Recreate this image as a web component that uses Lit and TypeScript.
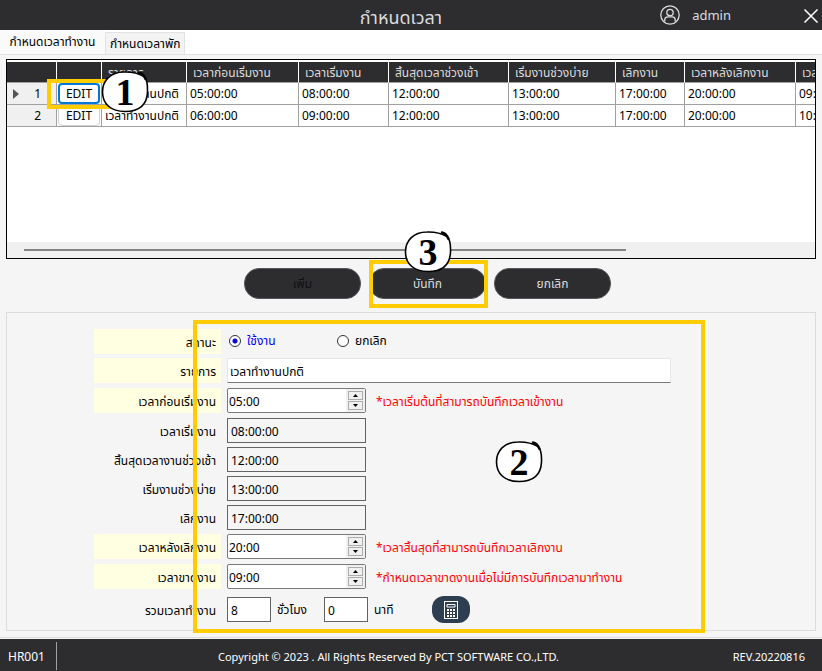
import { LitElement, html, css, svg } from "lit";
import { customElement, property, state } from "lit/decorators.js";

const FONT = css`"Noto Sans", "Noto Sans Thai", sans-serif`;

interface Shift {
  name: string;
  times: string[];
}

const COLUMNS = [
  "รายการ",
  "เวลาก่อนเริ่มงาน",
  "เวลาเริ่มงาน",
  "สิ้นสุดเวลาช่วงเช้า",
  "เริ่มงานช่วงบ่าย",
  "เลิกงาน",
  "เวลาหลังเลิกงาน",
  "เวลาขาดงาน",
];

const SHIFTS: Shift[] = [
  {
    name: "เวลาทำงานปกติ",
    times: ["05:00:00", "08:00:00", "12:00:00", "13:00:00", "17:00:00", "20:00:00", "09:00:00"],
  },
  {
    name: "เวลาทำงานปกติ",
    times: ["06:00:00", "09:00:00", "12:00:00", "13:00:00", "17:00:00", "20:00:00", "10:00:00"],
  },
];

/* Hand-drawn circle with a step number inside. */
@customElement("step-badge")
export class StepBadge extends LitElement {
  @property() step = "1";

  static styles = css`
    :host {
      display: grid;
      width: 48px;
      height: 44px;
      pointer-events: none;
    }
    .ring,
    .num {
      grid-area: 1 / 1;
    }
    .num {
      place-self: center;
      font: bold 38px/40px "Liberation Serif", serif;
      color: #000;
    }
  `;

  render() {
    return html`
      <svg class="ring" width="48" height="44" viewBox="0 0 48 44" aria-hidden="true">
        ${svg`<path d="M23 2C9 2 1.500 11 1.500 22C1.500 34 10 41.500 24 41.500C39 41.500 46 34 46.500 22C46.800 14 46 9 43 6.500C37 3 30 1.800 23 2Z" fill="#fff" stroke="#000" stroke-width="1.600"/>
        <path d="M38 2.500Q42 3 44.500 9" fill="none" stroke="#000" stroke-width="2.400" stroke-linecap="round"/>`}
      </svg>
      <span class="num">${this.step}</span>
    `;
  }
}

/* Time box with a pair of up and down buttons. */
@customElement("time-spinner")
export class TimeSpinner extends LitElement {
  @property() value = "";
  @property() label = "";

  static styles = css`
    :host {
      display: block;
      width: 139px;
      flex: none;
    }
    .box {
      display: flex;
      box-sizing: border-box;
      height: 25px;
      border: 1px solid #7a7a7a;
      border-radius: 2px;
      background: #fff;
    }
    .value {
      flex: 1;
      min-width: 0;
      border: 0;
      padding: 2px 1px 0;
      background: none;
      outline: none;
      font: 12px/20px ${FONT};
      color: #000;
    }
    .steps {
      display: flex;
      flex-direction: column;
      gap: 1px;
      padding: 2px;
      background: #f0f0f0;
    }
    .step {
      display: grid;
      place-items: center;
      width: 15px;
      height: 9px;
      padding: 0;
      border: 1px solid #adadad;
      background: #f0f0f0;
    }
  `;

  render() {
    return html`
      <div class="box">
        <input class="value" aria-label=${this.label} .value=${this.value} />
        <div class="steps">
          <button class="step" aria-label="เพิ่มเวลา">
            <svg width="5" height="3" viewBox="0 0 5 3"><path d="M0 3L2.500 0L5 3Z" /></svg>
          </button>
          <button class="step" aria-label="ลดเวลา">
            <svg width="5" height="3" viewBox="0 0 5 3"><path d="M0 0L2.500 3L5 0Z" /></svg>
          </button>
        </div>
      </div>
    `;
  }
}

@customElement("app-root")
export class AppRoot extends LitElement {
  @state() private active = true;

  static styles = css`
    :host {
      display: flex;
      flex-direction: column;
      min-height: 100vh;
      background: #f5f5f5;
      color: #000;
      font: 12px/20px ${FONT};
    }
    button,
    input {
      font: inherit;
      color: inherit;
    }
    .topbar {
      display: grid;
      grid-template-columns: 1fr auto 1fr;
      align-items: center;
      height: 30px;
      background: #2d2d30;
      color: #dcdcdc;
    }
    .title {
      grid-column: 2;
      margin: 0;
      padding: 4px 20px 0 0;
      font-size: 18px;
      font-weight: 400;
    }
    .user {
      display: flex;
      align-items: center;
      justify-content: flex-end;
      gap: 12px;
      padding-right: 3px;
      font-size: 13px;
    }
    .close {
      display: grid;
      margin-left: 60px;
      padding: 2px 0 0;
      border: 0;
      background: none;
    }
    .tabs {
      display: flex;
      align-items: flex-end;
      height: 24px;
      border-bottom: 1px solid #e2e2e2;
      background: #fff;
    }
    .tab {
      height: 22px;
      padding: 1px 4px 0;
      border: 1px solid #e2e2e2;
      border-bottom: 0;
      background: #f3f3f3;
      white-space: nowrap;
    }
    .tab.current {
      width: 105px;
      height: 24px;
      padding: 0;
      border: 0;
      background: #fafafa;
    }
    .page {
      display: flex;
      flex: 1;
      flex-direction: column;
      padding: 4px 6px 6px;
      border-bottom: 1px solid #dcdcdc;
      margin-bottom: 1px;
    }
    .gridbox {
      position: relative;
      display: flex;
      flex-direction: column;
      height: 198px;
      border: 1px solid #000;
      background: #fff;
    }
    .viewport {
      flex: 1;
      overflow: hidden;
      padding-top: 2px;
    }
    .shifts {
      width: 900px;
      border-collapse: separate;
      border-spacing: 0;
      table-layout: fixed;
    }
    .c-mark { width: 50px; }
    .c-edit { width: 45px; }
    .c-name { width: 85px; }
    .c-1 { width: 112px; }
    .c-2 { width: 90px; }
    .c-3 { width: 120px; }
    .c-4 { width: 107px; }
    .c-5 { width: 69px; }
    .c-6 { width: 111px; }
    .shifts th,
    .shifts td {
      box-sizing: border-box;
      height: 22px;
      padding: 0 3px;
      overflow: hidden;
      border-right: 1px solid #a0a0a0;
      border-bottom: 1px solid #a0a0a0;
      font-weight: 400;
      text-align: left;
      white-space: nowrap;
    }
    .shifts thead th {
      height: 21px;
      padding: 2px 6px 0;
      border-right-color: #fff;
      background: #2d2d30;
      color: #dcdcdc;
      line-height: 18px;
    }
    .shifts tbody th {
      background: #f0f0f0;
    }
    .rowhead {
      display: flex;
      align-items: center;
      justify-content: space-between;
      padding: 0 12px 0 3px;
    }
    .shifts td.editcell {
      padding: 0 1px;
    }
    .edit {
      display: block;
      box-sizing: border-box;
      width: 100%;
      height: 21px;
      padding: 0;
      border: 1px solid #d0d0d0;
      border-radius: 4px;
      background: #fdfdfd;
      line-height: 18px;
    }
    .edit.focus {
      border: 2px solid #0078d7;
    }
    .hscroll {
      display: flex;
      align-items: center;
      height: 16px;
      padding: 0 189px 0 17px;
      background: #f0f0f0;
    }
    .thumb {
      flex: 1;
      height: 2px;
      background: #858585;
    }
    .actions {
      display: flex;
      justify-content: center;
      gap: 8px;
      margin-top: 9px;
      padding-left: 33px;
      margin-bottom: 13px;
    }
    .slot {
      position: relative;
    }
    .action {
      width: 117px;
      height: 31px;
      padding: 0;
      border: 1px solid #55565a;
      border-radius: 15px;
      background: #2d2d30;
      color: #dcdcdc;
    }
    .action:disabled {
      color: #101010;
    }
    .form {
      position: relative;
      box-sizing: border-box;
      margin: 0;
      height: 319px;
      padding: 16px 0 8px 87px;
      border: 1px solid #dcdcdc;
      display: flex;
      flex-direction: column;
      gap: 4px;
    }
    .row {
      display: flex;
      align-items: center;
      height: 25px;
    }
    .row.wide,
    .row.spin {
      margin-bottom: 1px;
    }
    .row.total {
      margin-top: 3px;
    }
    .cap {
      box-sizing: border-box;
      width: 127px;
      height: 25px;
      flex: none;
      margin-right: 6px;
      padding: 4px 5px 0 0;
      text-align: right;
    }
    .need {
      background: #ffffe1;
    }
    .radio {
      display: flex;
      align-items: center;
      gap: 6px;
      width: 108px;
      padding-bottom: 2px;
    }
    .radio.on {
      color: #00f;
    }
    .dot {
      appearance: none;
      box-sizing: border-box;
      width: 12px;
      height: 12px;
      margin: 0 0 0 2px;
      border: 1px solid #333;
      border-radius: 50%;
      background: #fff;
    }
    .dot:checked {
      background: radial-gradient(circle, #0000e0 2px, #fff 3px);
    }
    .text {
      box-sizing: border-box;
      width: 139px;
      height: 25px;
      padding: 2px 3px 0;
      border: 1px solid #646464;
      background: #f5f5f5;
    }
    .text.long {
      width: 444px;
      padding: 2px 2px 0;
      border-color: #e6e6e6 #e6e6e6 #7a7a7a;
      background: #fff;
    }
    .text.short {
      width: 44px;
      background: #fff;
    }
    .unit {
      width: 53px;
      padding-left: 6px;
      box-sizing: border-box;
    }
    .note {
      padding: 2px 0 0 10px;
      color: #f00;
    }
    .calc {
      display: grid;
      place-items: center;
      width: 38px;
      height: 27px;
      margin-left: 11px;
      padding: 0;
      border: 0;
      border-radius: 12px;
      background: #2c3e50;
    }
    .mark {
      position: absolute;
      box-sizing: border-box;
      border: 4px solid #fc0;
      pointer-events: none;
    }
    .mark-edit {
      left: 40px;
      top: 19px;
      width: 64px;
      height: 30px;
    }
    .mark-save {
      left: 0;
      top: -8px;
      width: 119px;
      height: 48px;
    }
    .mark-form {
      left: 186px;
      top: 7px;
      width: 512px;
      height: 313px;
    }
    step-badge {
      position: absolute;
    }
    .at-edit {
      left: 94px;
      top: 10px;
    }
    .at-save {
      left: 35px;
      top: -38px;
    }
    .at-form {
      left: 488px;
      top: 127px;
    }
    .footer {
      display: grid;
      grid-template-columns: 57px 1fr auto;
      align-items: center;
      height: 32px;
      padding: 2px 17px 0 0;
      box-sizing: border-box;
      background: #2d2d30;
      color: #fff;
      font-size: 11px;
    }
    .code {
      height: 28px;
      padding-left: 8px;
      border-right: 1px solid #a0a0a0;
      font-size: 12px;
      line-height: 30px;
      box-sizing: border-box;
    }
    .copy {
      padding: 2px 0 0 161px;
    }
    .rev {
      padding-top: 2px;
    }
  `;

  private timeRow(label: string, value: string) {
    return html`
      <label class="row">
        <span class="cap">${label}</span>
        <input class="text" readonly .value=${value} />
      </label>
    `;
  }

  private spinRow(label: string, value: string, note: string) {
    return html`
      <div class="row spin">
        <span class="cap need">${label}</span>
        <time-spinner .label=${label} .value=${value}></time-spinner>
        <span class="note">${note}</span>
      </div>
    `;
  }

  render() {
    return html`
      <header class="topbar">
        <h1 class="title">กำหนดเวลา</h1>
        <div class="user">
          <svg width="20" height="20" viewBox="0 0 20 20" fill="none" stroke="#dcdcdc" stroke-width="1.300" aria-hidden="true">
            <circle cx="10" cy="10" r="9.200" />
            <circle cx="10" cy="7.500" r="3.200" />
            <path d="M4.800 16.500V14.500Q5 11.800 8 11.800H12Q15 11.800 15.200 14.500V16.500" />
          </svg>
          <span>admin</span>
          <button class="close" aria-label="ปิด">
            <svg width="16" height="16" viewBox="0 0 16 16" stroke="#fff" stroke-width="1.500"><path d="M1.500 1.500L14.500 14.500M14.500 1.500L1.500 14.500" /></svg>
          </button>
        </div>
      </header>
      <nav class="tabs" role="tablist">
        <button class="tab current" role="tab" aria-selected="true">กำหนดเวลาทำงาน</button>
        <button class="tab" role="tab" aria-selected="false">กำหนดเวลาพัก</button>
      </nav>
      <main class="page">
        <section class="gridbox">
          <div class="viewport">
            <table class="shifts">
              <colgroup>
                <col class="c-mark" /><col class="c-edit" /><col class="c-name" />
                <col class="c-1" /><col class="c-2" /><col class="c-3" /><col class="c-4" />
                <col class="c-5" /><col class="c-6" /><col />
              </colgroup>
              <thead>
                <tr>
                  <th></th>
                  <th></th>
                  ${COLUMNS.map((c) => html`<th scope="col">${c}</th>`)}
                </tr>
              </thead>
              <tbody>
                ${SHIFTS.map(
                  (s, i) => html`<tr>
                    <th scope="row">
                      <div class="rowhead">
                        <svg width="6" height="10" viewBox="0 0 6 10">${i === 0 ? svg`<path d="M0 0L6 5L0 10Z" fill="#555" />` : ""}</svg>
                        <span>${i + 1}</span>
                      </div>
                    </th>
                    <td class="editcell"><button class="edit ${i === 0 ? "focus" : ""}">EDIT</button></td>
                    <td>${s.name}</td>
                    ${s.times.map((t) => html`<td>${t}</td>`)}
                  </tr>`
                )}
              </tbody>
            </table>
          </div>
          <div class="hscroll"><div class="thumb"></div></div>
          <div class="mark mark-edit"></div>
          <step-badge class="at-edit" step="1"></step-badge>
        </section>

        <div class="actions">
          <button class="action" disabled>เพิ่ม</button>
          <div class="slot">
            <button class="action">บันทึก</button>
            <div class="mark mark-save"></div>
            <step-badge class="at-save" step="3"></step-badge>
          </div>
          <button class="action">ยกเลิก</button>
        </div>

        <form class="form" @submit=${(e: Event) => e.preventDefault()}>
          <div class="row" role="radiogroup" aria-label="สถานะ">
            <span class="cap need">สถานะ</span>
            <label class="radio on"><input class="dot" type="radio" name="st" .checked=${this.active} @change=${() => (this.active = true)} />ใช้งาน</label>
            <label class="radio"><input class="dot" type="radio" name="st" .checked=${!this.active} @change=${() => (this.active = false)} />ยกเลิก</label>
          </div>
          <label class="row wide">
            <span class="cap need">รายการ</span>
            <input class="text long" value="เวลาทำงานปกติ" />
          </label>
          ${this.spinRow("เวลาก่อนเริ่มงาน", "05:00", "*เวลาเริ่มต้นที่สามารถบันทึกเวลาเข้างาน")}
          ${this.timeRow("เวลาเริ่มงาน", "08:00:00")}
          ${this.timeRow("สิ้นสุดเวลางานช่วงเช้า", "12:00:00")}
          ${this.timeRow("เริ่มงานช่วงบ่าย", "13:00:00")}
          ${this.timeRow("เลิกงาน", "17:00:00")}
          ${this.spinRow("เวลาหลังเลิกงาน", "20:00", "*เวลาสิ้นสุดที่สามารถบันทึกเวลาเลิกงาน")}
          ${this.spinRow("เวลาขาดงาน", "09:00", "*กำหนดเวลาขาดงานเมื่อไม่มีการบันทึกเวลามาทำงาน")}
          <div class="row total">
            <label class="cap" for="hours">รวมเวลาทำงาน</label>
            <input id="hours" class="text short" value="8" />
            <label class="unit" for="hours">ชั่วโมง</label>
            <input id="mins" class="text short" value="0" />
            <label class="unit" for="mins">นาที</label>
            <button class="calc" type="button" aria-label="คำนวณ">
              <svg width="14" height="18" viewBox="0 0 14 18" fill="none" stroke="#fff">
                <rect x=".5" y=".5" width="13" height="17" />
                <path d="M3 3.500H11V6H3Z" />
                <path d="M3 9H11M3 12H11M3 15H11" stroke-width="2" stroke-dasharray="2 1" />
              </svg>
            </button>
          </div>
          <div class="mark mark-form"></div>
          <step-badge class="at-form" step="2"></step-badge>
        </form>
      </main>
      <footer class="footer">
        <span class="code">HR001</span>
        <span class="copy">Copyright © 2023 . All Rights Reserved By PCT SOFTWARE CO.,LTD.</span>
        <span class="rev">REV.20220816</span>
      </footer>
    `;
  }
}
